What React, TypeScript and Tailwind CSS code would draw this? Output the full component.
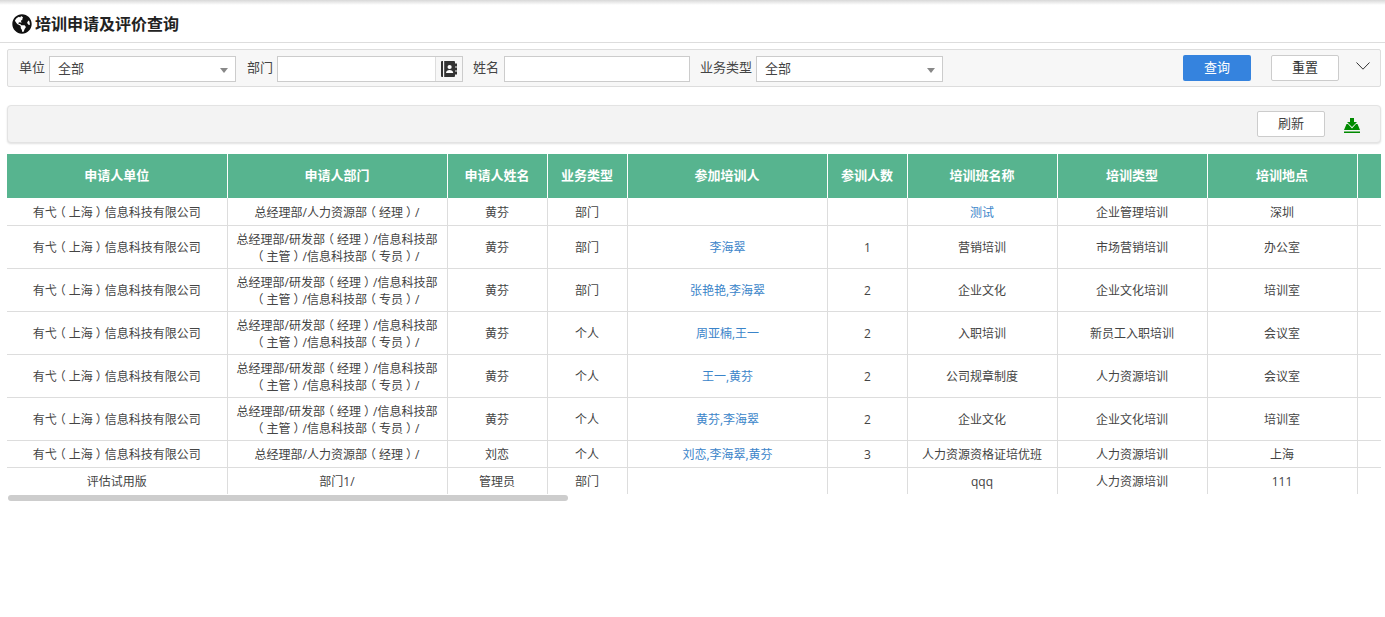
import { Fragment } from "react"
import { FaGlobeAmericas } from "react-icons/fa"

const font = { fontFamily: '"Open Sans", "Noto Sans CJK SC", sans-serif' }

const company = "有弋（上海）信息科技有限公司"
const deptLong = "总经理部/研发部（经理）/信息科技部（主管）/信息科技部（专员）/"
const deptShort = "总经理部/人力资源部（经理）/"

const headers = ["申请人单位", "申请人部门", "申请人姓名", "业务类型", "参加培训人", "参训人数", "培训班名称", "培训类型", "培训地点", ""]

const rows = [
  { unit: company, dept: deptShort, name: "黄芬", biz: "部门", people: "", count: "", cls: "测试", clsLink: true, type: "企业管理培训", place: "深圳", h: "h-[27px]" },
  { unit: company, dept: deptLong, name: "黄芬", biz: "部门", people: "李海翠", count: "1", cls: "营销培训", type: "市场营销培训", place: "办公室", h: "h-[43px]" },
  { unit: company, dept: deptLong, name: "黄芬", biz: "部门", people: "张艳艳,李海翠", count: "2", cls: "企业文化", type: "企业文化培训", place: "培训室", h: "h-[43px]" },
  { unit: company, dept: deptLong, name: "黄芬", biz: "个人", people: "周亚楠,王一", count: "2", cls: "入职培训", type: "新员工入职培训", place: "会议室", h: "h-[43px]" },
  { unit: company, dept: deptLong, name: "黄芬", biz: "个人", people: "王一,黄芬", count: "2", cls: "公司规章制度", type: "人力资源培训", place: "会议室", h: "h-[43px]" },
  { unit: company, dept: deptLong, name: "黄芬", biz: "个人", people: "黄芬,李海翠", count: "2", cls: "企业文化", type: "企业文化培训", place: "培训室", h: "h-[43px]" },
  { unit: company, dept: deptShort, name: "刘恋", biz: "个人", people: "刘恋,李海翠,黄芬", count: "3", cls: "人力资源资格证培优班", type: "人力资源培训", place: "上海", h: "h-[27px]" },
  { unit: "评估试用版", dept: "部门1/", name: "管理员", biz: "部门", people: "", count: "", cls: "qqq", type: "人力资源培训", place: "111", h: "h-[27px]" },
]

// the full-width brackets sit in the middle of their cell in the reference font
function Brackets({ text }: { text: string }) {
  const parts = text.split(/([（）])/)
  return (
    <>
      {parts.map((p, i) => (
        <Fragment key={i}>
          {p === "（" || p === "）" ? <span className="inline-block px-[3px] [font-feature-settings:'halt']">{p}</span> : p}
        </Fragment>
      ))}
    </>
  )
}

function SelectBox({ width }: { width: string }) {
  return (
    <div className={`${width} mt-[2px] flex h-[26px] items-center justify-between border border-[#ccc] bg-white pl-2 pr-[7px]`}>
      <span>全部</span>
      <span className="mt-[2px] h-0 w-0 border-x-[4px] border-t-[5px] border-x-transparent border-t-[#888]" />
    </div>
  )
}

function ContactIcon() {
  return (
    <svg viewBox="0 0 16 16" className="h-4 w-4">
      <path d="M0 1A1 1 0 0 1 1 0H2v16H1a1 1 0 0 1-1-1Z" fill="#333" />
      <path d="M3.2 0H13a1 1 0 0 1 1 1v1.5h2v3h-2v1h2v3h-2v1h2v3h-2V15a1 1 0 0 1-1 1H3.2Z" fill="#333" />
      <circle cx="8.6" cy="6" r="2.1" fill="#fff" />
      <path d="M5 12c0-2.2 1.6-3.1 3.6-3.1s3.6.9 3.6 3.1Z" fill="#fff" />
    </svg>
  )
}

function DownloadIcon() {
  return (
    <svg viewBox="0 0 16 15" className="h-[15px] w-4">
      <path d="M6 0h4v4h3L8 9 3 4h3Z" fill="#008a00" />
      <path d="M0 12 2.5 6H4l4 4.5L12 6h1.5L16 12Z" fill="#008a00" />
      <rect x="0" y="13.5" width="16" height="1.5" fill="#008a00" />
    </svg>
  )
}

export default function App() {
  return (
    <div className="min-h-[617px] bg-white text-[12px] text-[#444]" style={font}>
      <div className="h-[5px] bg-gradient-to-b from-[#d8d8d8] to-white" />
      <div className="flex h-[38px] items-center gap-[3px] border-b border-[#ddd] pl-3 pt-[1px]">
        <FaGlobeAmericas size={20} className="shrink-0 text-[#111]" />
        <h1 className="text-[16px] font-bold text-[#222]">培训申请及评价查询</h1>
      </div>

      <div className="ml-[7px] mr-[4px] mt-[6px] flex h-[38px] items-center rounded-[2px] border border-[#ddd] bg-[#f7f7f7] pl-[11px] text-[13px] text-[#444]">
        <span className="mr-[4px]">单位</span>
        <SelectBox width="w-[187px]" />
        <span className="ml-[11px] mr-[4px]">部门</span>
        <div className="mt-[2px] flex h-[26px] w-[186px] border border-[#ccc] bg-white">
          <div className="flex-1" />
          <div className="flex w-[27px] items-center justify-center border-l border-[#ddd] bg-[#f7f7f7]">
            <ContactIcon />
          </div>
        </div>
        <span className="ml-[10px] mr-[5px]">姓名</span>
        <div className="mt-[2px] h-[26px] w-[186px] border border-[#ccc] bg-white" />
        <span className="ml-[10px] mr-[4px]">业务类型</span>
        <SelectBox width="w-[187px]" />
        <button className="ml-auto h-[26px] w-[68px] rounded-[2px] bg-[#3583de] text-white">查询</button>
        <button className="ml-[20px] h-[26px] w-[68px] rounded-[2px] border border-[#ccc] bg-white text-[#333]">重置</button>
        <svg viewBox="0 0 14 8" className="mb-[4px] ml-[17px] mr-[10px] h-2 w-[14px]" fill="none" stroke="#333" strokeWidth="1">
          <path d="M0.5 0.5 7 7.2 13.5 0.5" />
        </svg>
      </div>

      <div className="ml-[7px] mr-[4px] mt-[18px] flex h-[38px] items-center justify-end rounded-[4px] border border-[#e3e3e3] bg-[#f3f3f3] shadow-[0_1px_2px_rgba(0,0,0,0.12)]">
        <button className="h-[26px] w-[68px] rounded-[2px] border border-[#ccc] bg-white text-[13px] text-[#444]">刷新</button>
        <span className="ml-[19px] mr-[20px] mt-[2px]"><DownloadIcon /></span>
      </div>

      <div className="ml-[7px] mr-[4px] mt-[11px] overflow-hidden">
        <table className="w-[1400px] table-fixed border-collapse">
          <colgroup>
            <col className="w-[220px]" />
            <col className="w-[220px]" />
            <col className="w-[100px]" />
            <col className="w-[80px]" />
            <col className="w-[200px]" />
            <col className="w-[80px]" />
            <col className="w-[150px]" />
            <col className="w-[150px]" />
            <col className="w-[150px]" />
            <col className="w-[50px]" />
          </colgroup>
          <thead>
            <tr className="h-[44px] bg-[#57b48f] text-[13px] font-bold text-white">
              {headers.map((h, i) => (
                <th key={i} className="border-r border-white font-bold">{h}</th>
              ))}
            </tr>
          </thead>
          <tbody>
            {rows.map((r, i) => (
              <tr key={i} className={`${r.h} border-b border-[#ddd] text-center leading-[17px] last:border-b-0 [&>td]:pt-[2px]`}>
                <td className="border-r border-[#ddd]"><Brackets text={r.unit} /></td>
                <td className="border-r border-[#ddd] px-2"><Brackets text={r.dept} /></td>
                <td className="border-r border-[#ddd]">{r.name}</td>
                <td className="border-r border-[#ddd]">{r.biz}</td>
                <td className="border-r border-[#ddd] pl-[1px] text-[#3a84c9]">{r.people}</td>
                <td className="border-r border-[#ddd] pl-[1px]">{r.count}</td>
                <td className={`border-r border-[#ddd] ${r.clsLink ? "text-[#3a84c9]" : ""}`}>{r.cls}</td>
                <td className="border-r border-[#ddd]">{r.type}</td>
                <td className="border-r border-[#ddd]">{r.place}</td>
                <td />
              </tr>
            ))}
          </tbody>
        </table>
      </div>
      <div className="ml-[7px] mt-[1px]">
        <div className="ml-[1px] h-[6px] w-[560px] rounded-[3px] bg-[#cdcdcd]" />
      </div>
    </div>
  )
}
